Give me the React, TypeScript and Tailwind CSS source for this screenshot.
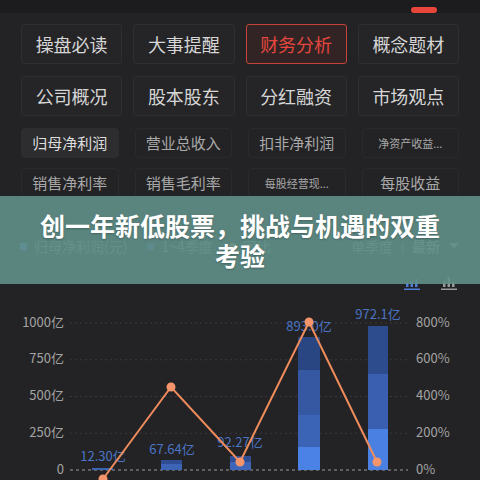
import React from "react";

const tabs = [
  "操盘必读", "大事提醒", "财务分析", "概念题材",
  "公司概况", "股本股东", "分红融资", "市场观点",
];

const metrics = [
  { label: "归母净利润", small: false },
  { label: "营业总收入", small: false },
  { label: "扣非净利润", small: false },
  { label: "净资产收益...", small: true },
  { label: "销售净利率", small: false },
  { label: "销售毛利率", small: false },
  { label: "每股经营现...", small: true },
  { label: "每股收益", small: false },
];

const grid = [33, 69.75, 106.5, 143.25];
const leftTicks = ["1000亿", "750亿", "500亿", "250亿"];
const rightTicks = ["800%", "600%", "400%", "200%"];

const bars = [
  { x: 92, w: 21, segs: [{ y: 178, h: 2, c: "#3c64b4" }], label: "12.30亿", lx: 103, ly: 167 },
  { x: 161, w: 21, segs: [{ y: 170, h: 4, c: "#2e4d92" }, { y: 174, h: 6, c: "#3d64b6" }], label: "67.64亿", lx: 172, ly: 160 },
  { x: 230, w: 21, segs: [{ y: 166, h: 6, c: "#2e4d92" }, { y: 172, h: 8, c: "#3d66bb" }], label: "92.27亿", lx: 240, ly: 153 },
  {
    x: 298, w: 22,
    segs: [
      { y: 47, h: 33, c: "#2a4682" },
      { y: 80, h: 45, c: "#3657a2" },
      { y: 125, h: 32, c: "#3b63b6" },
      { y: 157, h: 23, c: "#4a82e6" },
    ],
    label: "893.0亿", lx: 309, ly: 37,
  },
  {
    x: 368, w: 20,
    segs: [
      { y: 36, h: 48, c: "#2d4c8e" },
      { y: 84, h: 55, c: "#3a5eb0" },
      { y: 139, h: 41, c: "#4a80e2" },
    ],
    label: "972.1亿", lx: 378, ly: 25,
  },
];

const points = [
  [103, 189],
  [171, 97],
  [240, 172],
  [309, 32],
  [377, 172],
];

function BarIcon({ color, heights }: { color: string; heights: number[] }) {
  return (
    <svg width="16" height="13" viewBox="0 0 16 13">
      {heights.map((h, i) => (
        <rect key={i} x={2 + i * 4.5} y={10 - h} width="2.5" height={h} fill={color} />
      ))}
      <rect x="0" y="11.5" width="16" height="1.5" fill={color} />
    </svg>
  );
}

function Chart() {
  return (
    <svg width="480" height="190" viewBox="0 0 480 190" className="block">
      {grid.map((y) => (
        <line key={y} x1="70" x2="408" y1={y} y2={y} stroke="#3a3a3d" strokeDasharray="2 3" />
      ))}
      <line x1="70" x2="408" y1="180" y2="180" stroke="#9c9c9c" strokeWidth="1.2" strokeDasharray="3 3" />
      {leftTicks.map((t, i) => (
        <text key={t} x="64" y={grid[i]} textAnchor="end" dominantBaseline="middle" fontSize="13" fill="#a3a3a3">
          {t}
        </text>
      ))}
      <text x="64" y="180" textAnchor="end" dominantBaseline="middle" fontSize="13" fill="#a3a3a3">0</text>
      {rightTicks.map((t, i) => (
        <text key={t} x="416" y={grid[i]} dominantBaseline="middle" fontSize="13" fill="#a3a3a3">
          {t}
        </text>
      ))}
      <text x="416" y="180" dominantBaseline="middle" fontSize="13" fill="#a3a3a3">0%</text>

      {bars.map((b) =>
        b.segs.map((s, i) => (
          <rect key={b.label + i} x={b.x} y={s.y} width={b.w} height={s.h} fill={s.c} />
        ))
      )}
      {bars.map((b) => (
        <text key={b.label} x={b.lx} y={b.ly} textAnchor="middle" dominantBaseline="middle" fontSize="13" fill="#4b74c4">
          {b.label}
        </text>
      ))}

      <polyline
        points={points.map((p) => p.join(",")).join(" ")}
        fill="none"
        stroke="#f08c5c"
        strokeWidth="2"
      />
      {points.map(([x, y]) => (
        <circle key={x} cx={x} cy={y} r="4.5" fill="#f4946a" />
      ))}
    </svg>
  );
}

export default function App() {
  return (
    <div className="relative h-[480px] w-[480px] overflow-hidden bg-[#232325] font-['Noto_Sans_CJK_SC',sans-serif]">
      <div className="flex h-[13px] justify-end bg-[#1c1c1e] pr-[43px] pt-[7px]">
        <div className="h-[6px] w-[26px] rounded-full bg-[#e8453c]" />
      </div>

      <div className="grid grid-cols-4 gap-x-[11px] gap-y-3 px-[21px] pt-[11px]">
        {tabs.map((t) => {
          const active = t === "财务分析";
          return (
            <div
              key={t}
              className={`flex h-10 items-center justify-center rounded-[3px] border text-[18px] ${
                active
                  ? "border-[#c8433b] bg-[#322424] text-[#e5473e]"
                  : "border-[#2e2e30] bg-[#252527] text-[#d6d6d6]"
              }`}
            >
              {t}
            </div>
          );
        })}
      </div>

      <div className="mt-3 grid grid-cols-4 gap-x-4 gap-y-[10px] px-[21px]">
        {metrics.map((m, i) => (
          <div
            key={m.label}
            className={`flex h-[30px] items-center justify-center rounded-[4px] border ${
              i === 0 ? "border-[#2d2d2f] bg-[#2d2d2f] text-[#dedede]" : "border-[#2a2a2c] text-[#a9a9a9]"
            } ${m.small ? "text-[11px]" : "text-[15px]"}`}
          >
            {m.label}
          </div>
        ))}
      </div>

      <div className="mt-[38px] flex h-5 items-center px-5 text-[14px] text-[#8a8a8a]">
        <span className="mr-[7px] h-[7px] w-[7px] bg-[#4a7fe0]" />
        <span>归母净利润(元)</span>
        <span className="ml-5 mr-[7px] h-[7px] w-[7px] bg-[#3c62b0]" />
        <span>1~4季度</span>
        <span className="ml-4 mr-[7px] h-[7px] w-[7px] rounded-full bg-[#f08c5c]" />
        <span>同比</span>
        <span className="ml-auto">单季度</span>
        <span className="mx-2 text-[11px]">|</span>
        <span className="text-[#b0b0b0]">最新</span>
        <svg width="12" height="8" viewBox="0 0 12 8" className="ml-2">
          <path d="M1 1 L6 7 L11 1 Z" fill="#8a8a8a" />
        </svg>
      </div>

      <div className="mt-[21px] flex h-[13px] justify-end gap-[21px] pr-[23px]">
        <BarIcon color="#4f7fd8" heights={[4, 6, 8]} />
        <BarIcon color="#9a9a9a" heights={[6, 10, 5]} />
      </div>

      <Chart />

      <div className="absolute left-0 right-0 top-[196px] flex h-[88px] flex-col items-center justify-center bg-[rgba(97,144,138,0.9)] text-center text-[25px] font-bold leading-[30px] text-white [text-shadow:0_1px_2px_rgba(0,0,0,0.25)]">
        <div className="whitespace-nowrap">创一年新低股票，挑战与机遇的双重</div>
        <div className="whitespace-nowrap">考验</div>
      </div>
    </div>
  );
}
